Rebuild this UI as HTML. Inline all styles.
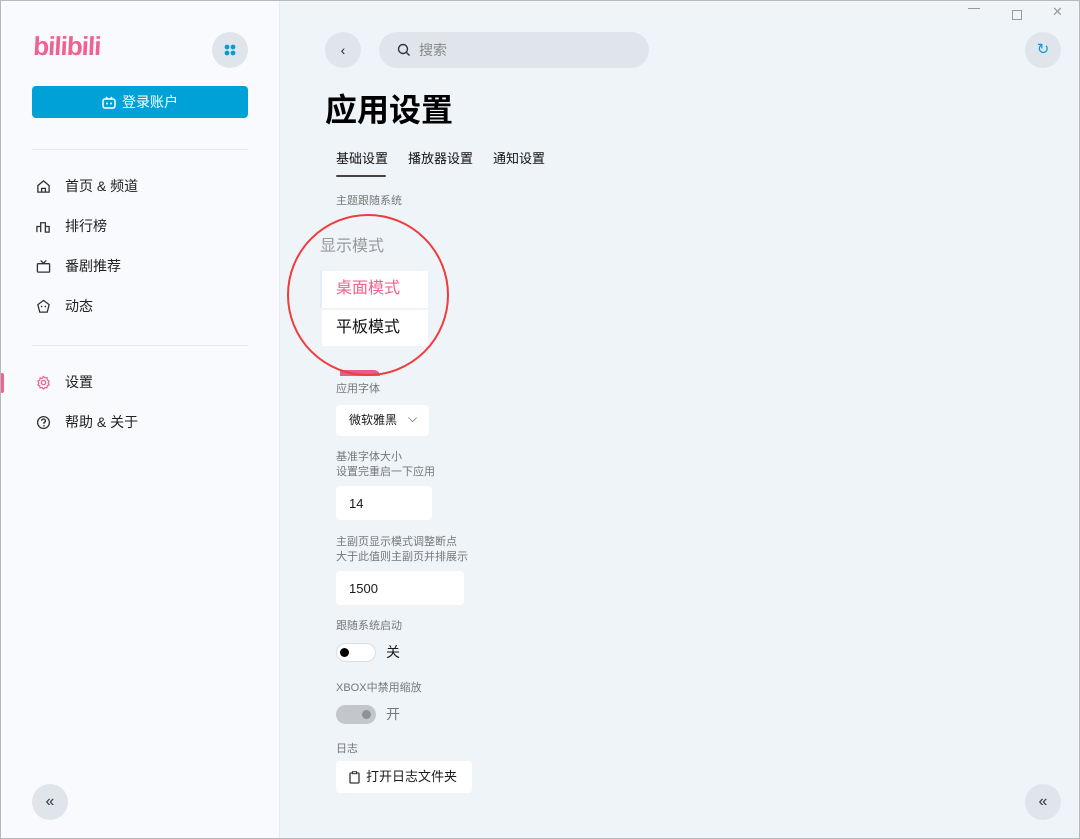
<!DOCTYPE html>
<html><head><meta charset="utf-8"><style>
*{margin:0;padding:0;box-sizing:border-box}
body{width:1080px;height:839px;overflow:hidden;font-family:"Liberation Sans","Noto Sans CJK SC",sans-serif;background:#eff4f9;position:relative;color:#1a1a1a;line-height:1.2}
.a{position:absolute}
.side{left:0;top:0;width:280px;height:839px;background:#f9fafd;border-right:1px solid #e8ecf0}
.frame{left:0;top:0;width:1080px;height:839px;border:1px solid #b8b8b8;pointer-events:none}
.nav{left:36px;font-size:14px;display:flex;align-items:center;gap:14px;color:#222}
.nav svg{width:15px;height:15px}
.lbl{font-size:11px;color:#777}
.box{background:#fff;border-radius:4px}
.circ{border-radius:50%;background:#dfe5eb}
</style></head><body>
<div class="a side"></div>
<div class="a" style="left:33px;top:31px;font-size:26px;font-weight:bold;color:#f0628f;font-style:italic;letter-spacing:-1px;transform:skewX(8deg);font-family:'Liberation Sans',sans-serif">bilibili</div>
<div class="a circ" style="left:212px;top:32px;width:36px;height:36px"></div>
<svg class="a" style="left:224px;top:44px" width="12" height="12"><circle cx="3" cy="3" r="2.4" fill="#0b9ad6"/><circle cx="9" cy="3" r="2.4" fill="#0b9ad6"/><circle cx="3" cy="9" r="2.4" fill="#0b9ad6"/><circle cx="9" cy="9" r="2.4" fill="#0b9ad6"/></svg>
<div class="a" style="left:32px;top:86px;width:216px;height:32px;background:#00a1d6;border-radius:4px;color:#fff;font-size:14px;display:flex;align-items:center;justify-content:center;gap:6px"><svg width="14" height="13"><rect x="1" y="3" width="12" height="9" rx="2" fill="none" stroke="#fff" stroke-width="1.5"/><path d="M4 1l2 2M10 1l-2 2" stroke="#fff" stroke-width="1.3"/><circle cx="5" cy="7.5" r="1" fill="#fff"/><circle cx="9" cy="7.5" r="1" fill="#fff"/></svg>登录账户</div>
<div class="a" style="left:32px;top:149px;width:216px;height:1px;background:#e5e8ec"></div>
<div class="a nav" style="top:178px"><svg viewBox="0 0 16 16"><path d="M2 7l6-5 6 5v7H2z M6 14v-4h4v4" fill="none" stroke="#333" stroke-width="1.4"/></svg>首页 &amp; 频道</div>
<div class="a nav" style="top:218px"><svg viewBox="0 0 16 16"><path d="M1 14V8h4v6M5 14V4h5v10M10 14V8h4v6z" fill="none" stroke="#333" stroke-width="1.4"/></svg>排行榜</div>
<div class="a nav" style="top:258px"><svg viewBox="0 0 16 16"><rect x="1.5" y="5" width="13" height="9" rx="1" fill="none" stroke="#333" stroke-width="1.4"/><path d="M5 1.5l3 3 3-3" fill="none" stroke="#333" stroke-width="1.4"/></svg>番剧推荐</div>
<div class="a nav" style="top:298px"><svg viewBox="0 0 16 16"><path d="M8 1.5l6 4.5-2 8H4L2 6z" fill="none" stroke="#333" stroke-width="1.4"/><circle cx="6" cy="8" r=".9" fill="#333"/><circle cx="10" cy="8" r=".9" fill="#333"/></svg>动态</div>
<div class="a" style="left:32px;top:345px;width:216px;height:1px;background:#e5e8ec"></div>
<div class="a" style="left:0;top:373px;width:4px;height:20px;background:#f0628f;border-radius:2px"></div>
<div class="a nav" style="top:374px"><svg viewBox="0 0 16 16"><circle cx="8" cy="8" r="2.3" fill="none" stroke="#f0628f" stroke-width="1.4"/><path d="M8 1.5l1.5 1.6 2.2-.3.3 2.2L14 6.5 13 8.5l1 2-2 1-.3 2.2-2.2-.3L8 15l-1.5-1.6-2.2.3-.3-2.2L2 10.5l1-2-1-2 2-1 .3-2.2 2.2.3z" fill="none" stroke="#f0628f" stroke-width="1.3"/></svg>设置</div>
<div class="a nav" style="top:414px"><svg viewBox="0 0 16 16"><circle cx="8" cy="8" r="6.3" fill="none" stroke="#333" stroke-width="1.4"/><path d="M6 6.3a2 2 0 1 1 2.5 1.9V9.5" fill="none" stroke="#333" stroke-width="1.4"/><circle cx="8.5" cy="11.5" r=".9" fill="#333"/></svg>帮助 &amp; 关于</div>
<div class="a circ" style="left:32px;top:784px;width:36px;height:36px;display:flex;align-items:center;justify-content:center;font-size:16px;color:#333">«</div>

<div class="a" style="left:968px;top:8px;width:12px;height:1px;background:#999"></div>
<div class="a" style="left:1012px;top:10px;width:10px;height:10px;border:1px solid #999"></div>
<div class="a" style="left:1052px;top:4px;font-size:13px;color:#999">✕</div>
<div class="a circ" style="left:325px;top:32px;width:36px;height:36px;display:flex;align-items:center;justify-content:center;font-size:14px;color:#222">‹</div>
<div class="a" style="left:379px;top:32px;width:270px;height:36px;background:#dfe5eb;border-radius:18px;display:flex;align-items:center;padding-left:18px;gap:8px;font-size:14px;color:#888"><svg width="14" height="14"><circle cx="6" cy="6" r="4.5" fill="none" stroke="#333" stroke-width="1.4"/><path d="M9.5 9.5l3 3" stroke="#333" stroke-width="1.4"/></svg>搜索</div>
<div class="a circ" style="left:1025px;top:32px;width:36px;height:36px;display:flex;align-items:center;justify-content:center;color:#0b9ad6;font-size:15px">↻</div>
<div class="a" style="left:325px;top:91px;font-size:32px;font-weight:bold;color:#000">应用设置</div>
<div class="a" style="left:336px;top:151px;font-size:13px;color:#111">基础设置</div>
<div class="a" style="left:336px;top:175px;width:50px;height:2px;background:#444;border-radius:1px"></div>
<div class="a" style="left:408px;top:151px;font-size:13px;color:#111">播放器设置</div>
<div class="a" style="left:493px;top:151px;font-size:13px;color:#111">通知设置</div>
<div class="a lbl" style="left:336px;top:195px">主题跟随系统</div>
<div class="a" style="left:320px;top:237px;font-size:16px;color:#999">显示模式</div>
<div class="a box" style="left:320px;top:271px;width:108px;height:37px;border-radius:0;border-left:2px solid #e5ecf2"></div>
<div class="a" style="left:336px;top:279px;font-size:16px;color:#f0628f">桌面模式</div>
<div class="a box" style="left:322px;top:310px;width:106px;height:36px;border-radius:0"></div>
<div class="a" style="left:336px;top:318px;font-size:16px;color:#111">平板模式</div>
<div class="a" style="left:340px;top:370px;width:40px;height:6px;background:#e95a8f;border-radius:4px 12px 0 0"></div>
<div class="a" style="left:287px;top:214px;width:162px;height:162px;border:2.5px solid #ef3d3d;border-radius:50%"></div>
<div class="a lbl" style="left:336px;top:383px">应用字体</div>
<div class="a box" style="left:336px;top:405px;width:93px;height:31px;font-size:12px;padding:8px 0 0 13px">微软雅黑<span style="position:absolute;left:72px;top:6px;color:#444">⌵</span></div>
<div class="a lbl" style="left:336px;top:450px;line-height:15px">基准字体大小<br>设置完重启一下应用</div>
<div class="a box" style="left:336px;top:486px;width:96px;height:34px;font-size:13px;padding:10px 0 0 13px">14</div>
<div class="a lbl" style="left:336px;top:535px;line-height:15px">主副页显示模式调整断点<br>大于此值则主副页并排展示</div>
<div class="a box" style="left:336px;top:571px;width:128px;height:34px;font-size:13px;padding:10px 0 0 13px">1500</div>
<div class="a lbl" style="left:336px;top:620px">跟随系统启动</div>
<div class="a" style="left:336px;top:643px;width:40px;height:19px;border:1.5px solid #ddd;border-radius:10px;background:#fff"></div>
<div class="a" style="left:340px;top:648px;width:9px;height:9px;border-radius:50%;background:#000"></div>
<div class="a" style="left:386px;top:644px;font-size:14px">关</div>
<div class="a lbl" style="left:336px;top:682px">XBOX中禁用缩放</div>
<div class="a" style="left:336px;top:705px;width:40px;height:19px;border-radius:10px;background:#c3c7cb"></div>
<div class="a" style="left:362px;top:710px;width:9px;height:9px;border-radius:50%;background:#8e9296"></div>
<div class="a" style="left:386px;top:706px;font-size:14px;color:#777">开</div>
<div class="a lbl" style="left:336px;top:743px">日志</div>
<div class="a box" style="left:336px;top:761px;width:136px;height:32px;font-size:13px;display:flex;align-items:center;padding-left:13px;gap:6px"><svg width="11" height="13"><rect x="1" y="2" width="9" height="10" rx="1" fill="none" stroke="#333" stroke-width="1.3"/><rect x="3.5" y=".7" width="4" height="2" fill="#fff" stroke="#333" stroke-width="1"/></svg>打开日志文件夹</div>
<div class="a circ" style="left:1025px;top:784px;width:36px;height:36px;display:flex;align-items:center;justify-content:center;font-size:16px;color:#333">«</div>
<div class="a frame"></div>
</body></html>
